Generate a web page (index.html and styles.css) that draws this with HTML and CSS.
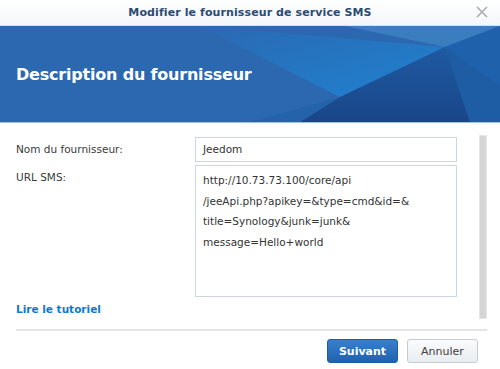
FILE: index.html
```html
<!DOCTYPE html>
<html lang="fr">
<head>
  <meta charset="UTF-8">
  <title>Modifier le fournisseur de service SMS</title>
  <link rel="stylesheet" href="styles.css">
</head>
<body>
  <div class="dialog">
    <div class="titlebar">
      <span class="title">Modifier le fournisseur de service SMS</span>
      <svg class="close" width="12" height="12" viewBox="0 0 12 12">
        <path d="M1 1 L11 11 M11 1 L1 11" stroke="#acacac" stroke-width="1.6" fill="none"/>
      </svg>
    </div>
    <div class="banner">
      <!-- decorative polygons behind the heading -->
      <svg class="banner-art" width="500" height="96" viewBox="0 0 500 96">
        <defs>
          <linearGradient id="g-mid" x1="0" y1="0" x2="1" y2="1">
            <stop offset="0" stop-color="#2b69b2"/>
            <stop offset="1" stop-color="#1f82d0"/>
          </linearGradient>
          <linearGradient id="g-dark" x1="0" y1="0" x2="0" y2="1">
            <stop offset="0" stop-color="#1e5aa2"/>
            <stop offset="1" stop-color="#1a4689"/>
          </linearGradient>
        </defs>
        <rect width="500" height="96" fill="#2c68b0"/>
        <polygon points="200,0 445,21 340,71" fill="url(#g-mid)"/>
        <polygon points="345,0 500,0 445,21" fill="#3a7ebf"/>
        <polygon points="445,21 500,0 500,96 470,96" fill="#1f62ab"/>
        <polygon points="340,71 445,21 470,96 300,96" fill="url(#g-dark)"/>
        <polygon points="340,71 300,96 250,96" fill="#2462a9"/>
        <polygon points="445,21 500,60 500,96 470,96" fill="#1e5aa0" opacity="0.6"/>
      </svg>
      <h1 class="banner-title">Description du fournisseur</h1>
    </div>
    <div class="content">
      <div class="form">
        <div class="row">
          <label class="label">Nom du fournisseur:</label>
          <div class="field input">Jeedom</div>
        </div>
        <div class="row">
          <label class="label">URL SMS:</label>
          <div class="field textarea">
            <span>http://10.73.73.100/core/api</span>
            <span>/jeeApi.php?apikey=&amp;type=cmd&amp;id=&amp;</span>
            <span>title=Synology&amp;junk=junk&amp;</span>
            <span>message=Hello+world</span>
          </div>
        </div>
        <a class="tuto-link">Lire le tutoriel</a>
      </div>
      <div class="scrollbar"></div>
    </div>
    <div class="footer">
      <button class="btn btn-primary">Suivant</button>
      <button class="btn">Annuler</button>
    </div>
  </div>
</body>
</html>
```

FILE: styles.css
```css
/* Base */
html, body {
  margin: 0;
  padding: 0;
  background: #fff;
}
body {
  font-family: "DejaVu Sans", Verdana, sans-serif;
  font-size: 10.5px;
  color: #3a3a3a;
}

.dialog {
  width: 500px;
  height: 369px;
  overflow: hidden;
}

/* Title bar */
.titlebar {
  position: relative;
  height: 25px;
  display: flex;
  align-items: center;
  justify-content: center;
  background: linear-gradient(#ffffff, #f3f6f9);
  border-bottom: 1px solid #d5e0ec;
}
.title {
  font-weight: bold;
  font-size: 11px;
  letter-spacing: 0.1px;
  color: #2b4b74;
}
.close {
  position: absolute;
  right: 12px;
  top: 6px;
}

/* Banner */
.banner {
  position: relative;
  height: 96px;
  display: flex;
  align-items: center;
  border-bottom: 1px solid #9fc1e4;
}
.banner-art {
  position: absolute;
  left: 0;
  top: 0;
}
.banner-title {
  position: relative;
  margin: 0 0 0 16px;
  font-size: 16px;
  letter-spacing: -0.2px;
  font-weight: bold;
  color: #fff;
}

/* Form area */
.content {
  display: flex;
  padding: 11px 13px 0 16px;
  height: 195px;
}
.form {
  flex: 1;
  padding-top: 3px;
}
.row {
  display: grid;
  grid-template-columns: 179px 262px;
  margin-bottom: 3px;
}
.label {
  line-height: 25px;
}
.field {
  box-sizing: border-box;
  border: 1px solid #ccd6e2;
  color: #333;
  padding: 0 7px;
}
.input {
  height: 25px;
  line-height: 23px;
}
.textarea {
  height: 132px;
  padding-top: 4px;
  display: flex;
  flex-direction: column;
}
.textarea span {
  line-height: 20.5px;
}
.tuto-link {
  display: block;
  margin-top: 6px;
  font-weight: bold;
  color: #0a79d6;
  cursor: pointer;
}
.scrollbar {
  width: 7px;
  margin-left: 22px;
  margin-top: 1px;
  height: 182px;
  background: #d5d5d5;
  border: 1px solid #e6e6e6;
}

/* Footer */
.footer {
  display: flex;
  justify-content: flex-end;
  gap: 9px;
  margin: 0 13px 0 16px;
  padding: 8px 9px 0 0;
  border-top: 2px solid #e4e4e4;
}
.btn {
  width: 71px;
  height: 24px;
  border-radius: 3px;
  border: 1px solid #c6ccd4;
  background: linear-gradient(#fafbfc, #e9edf1);
  font-family: inherit;
  font-size: 11px;
  color: #404040;
}
.btn-primary {
  border-color: #1f5ea6;
  background: linear-gradient(#3a7fcc, #1f63b0);
  color: #fff;
  font-weight: bold;
}
```
